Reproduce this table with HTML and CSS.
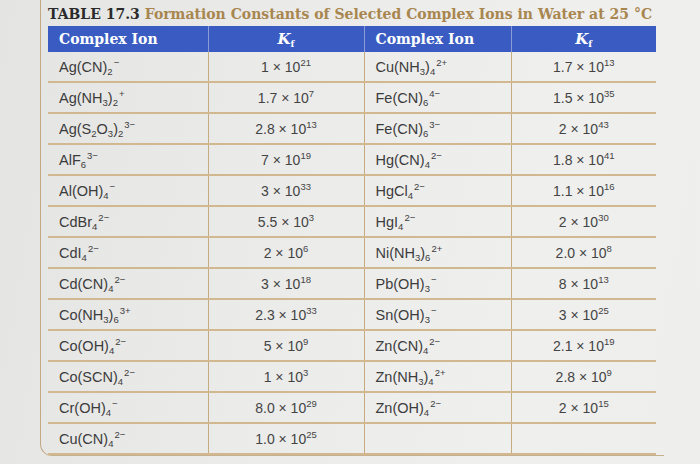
FILE: index.html
```html
<!DOCTYPE html>
<html>
<head>
<meta charset="utf-8">
<link rel="stylesheet" href="styles.css">
</head>
<body>
<div class="page">
  <div class="frame">
    <h1 class="title"><span class="tnum">TABLE 17.3</span> <span class="tname">Formation Constants of Selected Complex Ions in Water at 25 °C</span></h1>
    <table class="kt">
      <colgroup>
        <col class="c1"><col class="c2"><col class="c3"><col class="c4">
      </colgroup>
      <thead>
        <tr>
          <th class="ion">Complex Ion</th>
          <th class="kf"><i>K</i><sub>f</sub></th>
          <th class="ion">Complex Ion</th>
          <th class="kf"><i>K</i><sub>f</sub></th>
        </tr>
      </thead>
      <tbody>
        <tr><td>Ag(CN)<sub>2</sub><sup>−</sup></td><td class="v">1 × 10<sup>21</sup></td><td>Cu(NH<sub>3</sub>)<sub>4</sub><sup>2+</sup></td><td class="v">1.7 × 10<sup>13</sup></td></tr>
        <tr><td>Ag(NH<sub>3</sub>)<sub>2</sub><sup>+</sup></td><td class="v">1.7 × 10<sup>7</sup></td><td>Fe(CN)<sub>6</sub><sup>4−</sup></td><td class="v">1.5 × 10<sup>35</sup></td></tr>
        <tr><td>Ag(S<sub>2</sub>O<sub>3</sub>)<sub>2</sub><sup>3−</sup></td><td class="v">2.8 × 10<sup>13</sup></td><td>Fe(CN)<sub>6</sub><sup>3−</sup></td><td class="v">2 × 10<sup>43</sup></td></tr>
        <tr><td>AlF<sub>6</sub><sup>3−</sup></td><td class="v">7 × 10<sup>19</sup></td><td>Hg(CN)<sub>4</sub><sup>2−</sup></td><td class="v">1.8 × 10<sup>41</sup></td></tr>
        <tr><td>Al(OH)<sub>4</sub><sup>−</sup></td><td class="v">3 × 10<sup>33</sup></td><td>HgCl<sub>4</sub><sup>2−</sup></td><td class="v">1.1 × 10<sup>16</sup></td></tr>
        <tr><td>CdBr<sub>4</sub><sup>2−</sup></td><td class="v">5.5 × 10<sup>3</sup></td><td>HgI<sub>4</sub><sup>2−</sup></td><td class="v">2 × 10<sup>30</sup></td></tr>
        <tr><td>CdI<sub>4</sub><sup>2−</sup></td><td class="v">2 × 10<sup>6</sup></td><td>Ni(NH<sub>3</sub>)<sub>6</sub><sup>2+</sup></td><td class="v">2.0 × 10<sup>8</sup></td></tr>
        <tr><td>Cd(CN)<sub>4</sub><sup>2−</sup></td><td class="v">3 × 10<sup>18</sup></td><td>Pb(OH)<sub>3</sub><sup>−</sup></td><td class="v">8 × 10<sup>13</sup></td></tr>
        <tr><td>Co(NH<sub>3</sub>)<sub>6</sub><sup>3+</sup></td><td class="v">2.3 × 10<sup>33</sup></td><td>Sn(OH)<sub>3</sub><sup>−</sup></td><td class="v">3 × 10<sup>25</sup></td></tr>
        <tr><td>Co(OH)<sub>4</sub><sup>2−</sup></td><td class="v">5 × 10<sup>9</sup></td><td>Zn(CN)<sub>4</sub><sup>2−</sup></td><td class="v">2.1 × 10<sup>19</sup></td></tr>
        <tr><td>Co(SCN)<sub>4</sub><sup>2−</sup></td><td class="v">1 × 10<sup>3</sup></td><td>Zn(NH<sub>3</sub>)<sub>4</sub><sup>2+</sup></td><td class="v">2.8 × 10<sup>9</sup></td></tr>
        <tr><td>Cr(OH)<sub>4</sub><sup>−</sup></td><td class="v">8.0 × 10<sup>29</sup></td><td>Zn(OH)<sub>4</sub><sup>2−</sup></td><td class="v">2 × 10<sup>15</sup></td></tr>
        <tr class="last"><td>Cu(CN)<sub>4</sub><sup>2−</sup></td><td class="v">1.0 × 10<sup>25</sup></td><td></td><td class="v"></td></tr>
      </tbody>
    </table>
  </div>
</div>
</body>
</html>
```

FILE: styles.css
```css
html, body {
  margin: 0;
  padding: 0;
}
body {
  width: 700px;
  height: 464px;
  overflow: hidden;
  background: linear-gradient(100deg, #e4e4e3 0%, #ebebea 40%, #efefee 75%, #eeeeed 100%);
  font-family: "Liberation Sans", Arial, sans-serif;
}
.page {
  padding: 0 0 0 40px;
}
.frame {
  width: 624px;
  height: 456px;
  border-left: 1.5px solid #c2a883;
  border-bottom: 1.5px solid #c9b08c;
  border-bottom-left-radius: 12px;
  padding: 4px 0 0 7px;
  box-sizing: border-box;
}
.title {
  margin: 0;
  height: 22px;
  font-family: "DejaVu Serif", "Liberation Serif", serif;
  font-weight: bold;
  font-size: 14px;
  line-height: 20px;
  white-space: nowrap;
  letter-spacing: 0;
}
.tnum {
  color: #2a2a2a;
}
.tname {
  color: #a8864f;
}
.kt {
  border-collapse: collapse;
  table-layout: fixed;
  width: 608px;
}
.c1 { width: 160px; }
.c2 { width: 156px; }
.c3 { width: 147px; }
.c4 { width: 145px; }
.kt th {
  background: #3a5cc2;
  color: #fff;
  height: 26px;
  padding: 0;
  font-family: "DejaVu Serif", "Liberation Serif", serif;
  font-weight: bold;
  font-size: 14px;
  border-left: 1px solid #8a9bd6;
}
.kt th:first-child {
  border-left: none;
}
.kt th.ion {
  text-align: left;
  padding-left: 11px;
}
.kt th.kf {
  text-align: center;
}
.kt th.kf i {
  font-size: 15px;
}
.kt th.kf sub {
  font-size: 9px;
  font-style: normal;
}
.kt td {
  height: 29px;
  padding: 0 0 0 11px;
  font-size: 14.5px;
  color: #3c3c3c;
  border-bottom: 2px solid #d2b891;
  border-left: 1.5px solid #c6aa80;
  white-space: nowrap;
}
.kt td:first-child {
  border-left: none;
}
.kt td.v {
  text-align: center;
  padding: 0;
  font-size: 14px;
  color: #444;
}
.kt sub, .kt sup {
  font-size: 9.5px;
  line-height: 0;
  position: relative;
  vertical-align: baseline;
}
.kt sub {
  top: 3px;
}
.kt sup {
  top: -6px;
  margin-left: 1px;
}
.kt td.v sup {
  top: -6px;
  margin-left: 0;
}
.kt th sub {
  top: 3px;
}
```
